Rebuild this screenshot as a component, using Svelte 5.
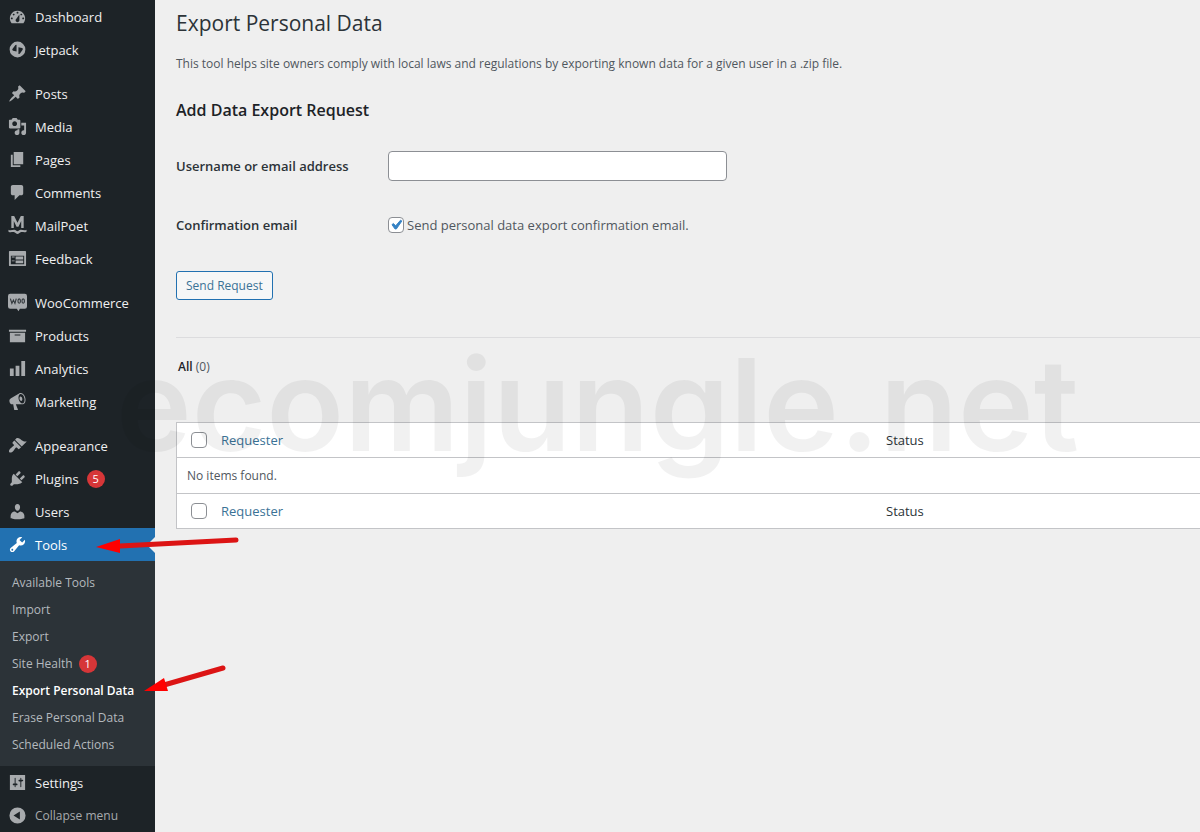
<script>
  let email = $state('');
  let sendConfirmation = $state(true);
  let allSelected = $state(false);

  const icons = {
    dashboard:
      'M3.76 17h12.48A7.998 7.998 0 0 0 10 4a7.998 7.998 0 0 0-6.24 13zM10 5c.55 0 1 .45 1 1s-.45 1-1 1-1-.45-1-1 .45-1 1-1zM6 7c.55 0 1 .45 1 1s-.45 1-1 1-1-.45-1-1 .45-1 1-1zm8 0c.55 0 1 .45 1 1s-.45 1-1 1-1-.45-1-1 .45-1 1-1zm-5.37 5.55L12 8v6c0 1.1-.9 2-2 2s-2-.9-2-2c0-.57.24-1.08.63-1.45zM4 11c.55 0 1 .45 1 1s-.45 1-1 1-1-.45-1-1 .45-1 1-1zm12 0c.55 0 1 .45 1 1s-.45 1-1 1-1-.45-1-1 .45-1 1-1z',
    jetpack:
      'M10 1.7a8.3 8.3 0 1 0 0 16.6 8.3 8.3 0 0 0 0-16.6zM9 5v7.2l-3.6-.9c-.9-.3-1.1-1-.7-1.7L7.8 5.2zM11 14.8V7.6l3.8.9c.8.3 1 1 .6 1.7L12.400 14.6z',
    posts:
      'M10.44 3.02l1.82-1.82 6.36 6.35-1.83 1.82c-1.05-.68-2.48-.57-3.41.36l-.75.75c-.92.93-1.04 2.35-.35 3.41l-1.83 1.82-2.41-2.41-2.8 2.79c-.42.42-3.38 2.71-3.8 2.29s1.86-3.39 2.28-3.81l2.79-2.79L4.1 9.36l1.83-1.82c1.05.69 2.48.57 3.4-.36l.75-.75c.93-.92 1.05-2.35.36-3.41z',
    media:
      'M13 11V4c0-.55-.45-1-1-1h-1.67L9 1H5L3.67 3H2c-.55 0-1 .45-1 1v7c0 .55.45 1 1 1h10c.55 0 1-.45 1-1zM7 4.5c1.38 0 2.5 1.12 2.5 2.5S8.38 9.5 7 9.5 4.5 8.38 4.5 7 5.62 4.5 7 4.5zM14 6h5v10.5c0 1.38-1.12 2.5-2.5 2.5S14 17.88 14 16.5s1.12-2.5 2.5-2.5c.17 0 .34.02.5.05V9h-3V6zm-4 8.05V13h2v3.5c0 1.38-1.12 2.5-2.5 2.5S7 17.88 7 16.5 8.12 14 9.5 14c.17 0 .34.02.5.05z',
    pages: 'M6 15V2h10v13H6zm-1 1h8v2H3V5h2v11z',
    comments:
      'M5 2h9c1.1 0 2 .9 2 2v7c0 1.1-.9 2-2 2h-2l-5 5v-5H5c-1.1 0-2-.9-2-2V4c0-1.1.9-2 2-2z',
    mailpoet:
      'M3.5 12.5V0h3l3.5 7 3.5-7h3v12.5h-2.6V5.3L11 11.3H9L6.1 5.3v7.2zM.5 14.5c2.5 1.5 5-.6 7 .3 1 .4 1.7 1.3 2.5 1.3s1.5-.9 2.5-1.3c2-.9 4.500 1.2 7-.3v2c-2.300 1.300-4.300-.1-6.200.5-1.300.4-2 1.900-3.300 1.900s-2-1.500-3.300-1.900c-1.900-.6-3.900.8-6.200-.5z',
    feedback:
      'M2 2h16c.55 0 1 .45 1 1v14c0 .55-.45 1-1 1H2c-.55 0-1-.45-1-1V3c0-.55.45-1 1-1zm15 14V7H3v9h14zM4 8v1h3V8H4zm4 0v3h8V8H8zm-4 4v1h3v-1H4zm4 0v3h8v-3H8z',
    woocommerce:
      'M2.3.8h15.4A2.3 2.3 0 0 1 20 3.1v11.2a2.3 2.3 0 0 1-2.3 2.3h-5.2L11 19.200l-1.700-2.600h-7A2.300 2.300 0 0 1 0 14.300V3.100A2.300 2.300 0 0 1 2.300.8z',
    products: 'M19 4v2H1V4h18zM2 7h16v10H2V7zm11 3V9H7v1h6z',
    analytics: 'M18 18V2h-4v16h4zm-6 0V7H8v11h4zm-6 0v-8H2v8h4z',
    marketing:
      'M18.15 5.94c.46 1.62.38 3.22-.02 4.48-.42 1.28-1.26 2.18-2.3 2.48-.16.06-.26.06-.4.06-.06.02-.12.02-.18.02-.06.02-.14.02-.22.02h-6.8l2.22 5.5c.02.14-.06.26-.14.34-.08.1-.24.16-.34.16H6.95c-.1 0-.26-.06-.34-.16-.08-.08-.16-.2-.14-.34l-1-5.5H4.25l-.02-.02c-.5.06-1.08-.18-1.54-.62s-.88-1.08-1.06-1.88c-.24-.8-.2-1.56-.02-2.2.18-.62.58-1.08 1.06-1.3l.02-.02 9-5.4c.1-.06.18-.1.24-.16.06-.04.14-.08.24-.12.16-.08.28-.12.5-.18 1.04-.3 2.24.1 3.22.98s1.84 2.24 2.26 3.86zm-2.58 5.98h-.02c.4-.1.74-.34 1.04-.7.58-.7.86-1.76.86-3.04 0-.64-.1-1.3-.28-1.98-.34-1.36-1.02-2.5-1.78-3.24s-1.68-1.1-2.46-.88c-.82.22-1.4.96-1.7 2-.32 1.04-.28 2.36.06 3.72.38 1.36 1 2.5 1.8 3.24.78.74 1.62 1.1 2.48.88zm-2.54-7.08c.22-.04.42-.02.62.04.38.16.76.48 1.02 1s.42 1.2.42 1.78c0 .3-.04.56-.12.8-.18.48-.44.84-.86.94-.34.1-.8-.06-1.14-.4s-.64-.86-.78-1.5c-.18-.62-.12-1.24.02-1.72s.48-.84.82-.94z',
    appearance:
      'M14.48 11.06L7.41 3.99l1.5-1.5c.5-.56 2.3-.47 3.51.32 1.21.8 1.43 1.28 2.91 2.1 1.18.64 2.45 1.26 4.45.85zm-.71.71L6.7 4.7 4.93 6.47c-.39.39-.39 1.02 0 1.41l1.06 1.06c.39.39.39 1.03 0 1.42-.6.6-1.43 1.11-2.21 1.69-.35.26-.7.53-1.01.84C1.43 14.23.4 16.08 1.4 17.07c.99 1 2.84-.03 4.18-1.36.31-.31.58-.66.85-1.02.57-.78 1.08-1.61 1.69-2.21.39-.39 1.02-.39 1.41 0l1.06 1.06c.39.39 1.02.39 1.41 0z',
    plugins:
      'M13.11 4.36L9.87 7.6 8 5.73l3.24-3.24c.35-.34 1.05-.2 1.56.32.52.51.66 1.21.31 1.55zm-8 1.77l.91-1.12 9.01 9.01-1.19.84c-.71.71-2.63 1.16-3.82 1.16H6.14L4.9 17.26c-.59.59-1.54.59-2.12 0-.59-.58-.59-1.53 0-2.12l1.24-1.24v-3.88c0-1.13.4-3.19 1.09-3.89zm7.26 3.97l3.24-3.24c.34-.35 1.04-.21 1.55.31.52.51.66 1.21.31 1.55l-3.24 3.25z',
    users:
      'M10 9.25c-2.27 0-2.73-3.44-2.73-3.44C7 4.02 7.82 2 9.97 2c2.16 0 2.98 2.02 2.71 3.81 0 0-.41 3.44-2.68 3.44zm0 2.57L12.72 10c2.39 0 4.52 2.33 4.52 4.53v2.49s-3.65 1.13-7.24 1.13c-3.65 0-7.24-1.13-7.24-1.13v-2.49c0-2.25 1.94-4.48 4.47-4.48z',
    tools:
      'M16.68 9.77c-1.34 1.34-3.3 1.67-4.95.99l-5.41 6.52c-.99.99-2.59.99-3.58 0s-.99-2.59 0-3.57l6.52-5.42c-.68-1.65-.35-3.61.99-4.95 1.28-1.28 3.12-1.62 4.72-1.06l-2.89 2.89 2.82 2.82 2.86-2.87c.53 1.58.18 3.39-1.08 4.65zM3.81 16.21c.4.39 1.04.39 1.43 0 .4-.4.4-1.04 0-1.43-.39-.4-1.03-.4-1.43 0-.39.39-.39 1.03 0 1.43z',
    settings:
      'M18 18V2H2v16h16zM8 11h1c.55 0 1 .45 1 1s-.45 1-1 1H8v1.5c0 .28-.22.5-.5.5s-.5-.22-.5-.5V13H6c-.55 0-1-.45-1-1s.45-1 1-1h1V5.5c0-.28.22-.5.5-.5s.5.22.5.5V11zm5-2h-1c-.55 0-1-.45-1-1s.45-1 1-1h1V5.5c0-.28.22-.5.5-.5s.5.22.5.5V7h1c.55 0 1 .45 1 1s-.45 1-1 1h-1v5.5c0 .28-.22.5-.5.5s-.5-.22-.5-.5V9z',
    collapse:
      'M10 1.500a8.500 8.500 0 1 1 0 17 8.500 8.500 0 0 1 0-17zm2.500 12.700V5.800L5.800 10z'
  };

  const groups = [
    [
      { icon: 'dashboard', label: 'Dashboard' },
      { icon: 'jetpack', label: 'Jetpack' }
    ],
    [
      { icon: 'posts', label: 'Posts' },
      { icon: 'media', label: 'Media' },
      { icon: 'pages', label: 'Pages' },
      { icon: 'comments', label: 'Comments' },
      { icon: 'mailpoet', label: 'MailPoet' },
      { icon: 'feedback', label: 'Feedback' }
    ],
    [
      { icon: 'woocommerce', label: 'WooCommerce' },
      { icon: 'products', label: 'Products' },
      { icon: 'analytics', label: 'Analytics' },
      { icon: 'marketing', label: 'Marketing' }
    ],
    [
      { icon: 'appearance', label: 'Appearance' },
      { icon: 'plugins', label: 'Plugins', count: 5 },
      { icon: 'users', label: 'Users' },
      {
        icon: 'tools',
        label: 'Tools',
        open: true,
        children: [
          { label: 'Available Tools' },
          { label: 'Import' },
          { label: 'Export' },
          { label: 'Site Health', count: 1 },
          { label: 'Export Personal Data', current: true },
          { label: 'Erase Personal Data' },
          { label: 'Scheduled Actions' }
        ]
      },
      { icon: 'settings', label: 'Settings' }
    ]
  ];
</script>

{#snippet icon(name)}
  <svg class="icon" viewBox="0 0 20 20" aria-hidden="true">
    <path d={icons[name]} fill-rule="evenodd" />
    {#if name === 'woocommerce'}
      <path class="woo-mark" d="M2.500 6l1.600 5L5.700 7.500 7.300 11l1.400-5" />
      <ellipse class="woo-mark" cx="11.800" cy="8.500" rx="1.300" ry="2.300" />
      <ellipse class="woo-mark" cx="16" cy="8.500" rx="1.300" ry="2.300" />
    {/if}
  </svg>
{/snippet}

<div class="admin">
  <nav class="menu" aria-label="Main menu">
    {#each groups as group}
      <ul class="group">
        {#each group as item}
          <li>
            <a href="#{item.icon}" class="item" class:open={item.open}>
              {@render icon(item.icon)}
              <span>{item.label}</span>
              {#if item.count}<span class="count">{item.count}</span>{/if}
            </a>
            {#if item.children}
              <ul class="submenu">
                {#each item.children as child}
                  <li>
                    <a href="#tools" class="subitem" class:current={child.current}>
                      <span>{child.label}</span>
                      {#if child.count}<span class="count">{child.count}</span>{/if}
                    </a>
                  </li>
                {/each}
              </ul>
            {/if}
          </li>
        {/each}
      </ul>
    {/each}
    <button type="button" class="item collapse">
      {@render icon('collapse')}
      <span>Collapse menu</span>
    </button>
  </nav>

  <main>
    <h1>Export Personal Data</h1>
    <p class="intro">
      This tool helps site owners comply with local laws and regulations by exporting known data
      for a given user in a .zip file.
    </p>

    <form onsubmit={(e) => e.preventDefault()}>
      <h2>Add Data Export Request</h2>
      <div class="field">
        <label class="name" for="email">Username or email address</label>
        <input id="email" type="text" class="text" bind:value={email} />
      </div>
      <div class="field">
        <span class="name">Confirmation email</span>
        <label class="check">
          <input type="checkbox" bind:checked={sendConfirmation} />
          Send personal data export confirmation email.
        </label>
      </div>
      <button type="submit" class="send">Send Request</button>
    </form>

    <hr />

    <p class="filter"><strong>All</strong> (0)</p>

    {#snippet headings()}
      <tr>
        <th class="cb"><input type="checkbox" aria-label="Select all" bind:checked={allSelected} /></th>
        <th class="requester"><a href="#requester">Requester</a></th>
        <th>Status</th>
      </tr>
    {/snippet}

    <table>
      <thead>{@render headings()}</thead>
      <tbody>
        <tr><td colspan="3">No items found.</td></tr>
      </tbody>
      <tfoot>{@render headings()}</tfoot>
    </table>
  </main>

  <div class="watermark" aria-hidden="true">ecomjungle.net</div>

  <svg class="arrow to-tools" viewBox="0 0 146 20" aria-hidden="true">
    <path class="shaft" d="M24 10L140 4" />
    <path class="head" d="M0 11L24 3v14z" />
  </svg>
  <svg class="arrow to-export" viewBox="0 0 84 30" aria-hidden="true">
    <path class="shaft" d="M20 21L79 4" />
    <path class="head" d="M0 27L20 14l4 13z" />
  </svg>
</div>

<style>
  :global(body) {
    margin: 0;
    background: #efefef;
  }

  .admin {
    position: relative;
    display: flex;
    min-height: 100vh;
    overflow: hidden;
    font-family: 'Segoe UI', 'Open Sans', 'Noto Sans', sans-serif;
    font-size: 13px;
    color: #50575e;
  }

  ul {
    margin: 0;
    padding: 0;
    list-style: none;
  }

  a {
    color: #3a7296;
    text-decoration: none;
  }

  .menu {
    flex: none;
    width: 155px;
    background: #1d2327;
  }

  .group + .group {
    margin-top: 11px;
  }

  .item {
    position: relative;
    display: flex;
    align-items: center;
    gap: 8px;
    width: 100%;
    height: 33px;
    padding: 0 8px;
    box-sizing: border-box;
    color: #f0f0f1;
    white-space: nowrap;
  }

  .icon {
    flex: none;
    width: 19px;
    height: 19px;
    fill: #a7aaad;
  }

  .woo-mark {
    fill: none;
    stroke: #33393d;
    stroke-width: 1.2;
  }

  .item.open {
    background: #2271b1;
    color: #fff;
  }

  .item.open .icon {
    fill: #fff;
  }

  /* notch pointing from the page to the open section */
  .item.open::after {
    content: '';
    position: absolute;
    right: 0;
    top: 9px;
    border: 8px solid transparent;
    border-left-width: 0;
    border-right-color: #efefef;
  }

  .count {
    width: 18px;
    height: 18px;
    border-radius: 9px;
    background: #d63638;
    color: #fff;
    font-size: 11px;
    line-height: 18px;
    text-align: center;
  }

  .submenu {
    padding: 8px 0;
    background: #2c3338;
  }

  .subitem {
    display: flex;
    align-items: center;
    gap: 6px;
    height: 27px;
    padding-left: 12px;
    color: #b4b9be;
    font-size: 12px;
    white-space: nowrap;
  }

  .subitem.current {
    color: #fff;
    font-weight: 600;
  }

  .collapse {
    border: 0;
    background: none;
    color: #a7aaad;
    font: inherit;
    font-size: 12px;
    text-align: left;
    cursor: pointer;
  }

  main {
    flex: 1;
    min-width: 0;
    padding: 8px 0 0 21px;
  }

  h1 {
    margin: 0;
    color: #2c3338;
    font-size: 21px;
    font-weight: 400;
    line-height: 30px;
  }

  .intro {
    margin: 16px 0 0;
    font-size: 12px;
    line-height: 20px;
  }

  h2 {
    margin: 24px 0 0;
    color: #1d2327;
    font-size: 16px;
    font-weight: 600;
    line-height: 24px;
  }

  .field {
    display: flex;
    align-items: center;
    height: 30px;
    margin-top: 29px;
  }

  .name {
    width: 212px;
    color: #2c3338;
    font-weight: 600;
  }

  input {
    margin: 0;
    border: 1px solid #8c8f94;
    background: #fff;
    box-sizing: border-box;
  }

  .text {
    width: 339px;
    height: 30px;
    padding: 0 8px;
    border-radius: 4px;
    font: inherit;
  }

  .check {
    display: flex;
    align-items: center;
    gap: 3px;
  }

  input[type='checkbox'] {
    appearance: none;
    display: block;
    width: 16px;
    height: 16px;
    border-radius: 4px;
  }

  input[type='checkbox']:checked {
    background: #fff
      url("data:image/svg+xml,%3Csvg xmlns='http://www.w3.org/2000/svg' viewBox='0 0 20 20'%3E%3Cpath d='M14.83 4.89l1.34.94-5.81 8.38H9.02L5.78 9.67l1.34-1.25 2.57 2.4z' fill='%233582c4' stroke='%233582c4'/%3E%3C/svg%3E")
      center / 19px no-repeat;
  }

  .send {
    height: 29px;
    margin-top: 31px;
    padding: 0 9px;
    border: 1px solid #2271b1;
    border-radius: 3px;
    background: #f6f7f7;
    color: #3a7296;
    font: inherit;
    font-size: 12px;
    cursor: pointer;
  }

  hr {
    margin: 37px 0 0;
    border: 0;
    border-top: 1px solid #dcdcde;
  }

  .filter {
    margin: 19px 0 0;
    padding-left: 2px;
    font-size: 12px;
    line-height: 20px;
  }

  .filter strong {
    color: #1d2327;
    font-weight: 600;
  }

  table {
    width: 100%;
    margin-top: 45px;
    border: 1px solid #c3c4c7;
    border-right: 0;
    border-spacing: 0;
    background: #fff;
  }

  th,
  td {
    height: 34px;
    padding: 0 0 0 10px;
    font-weight: 400;
    text-align: left;
  }

  th {
    color: #2c3338;
  }

  td {
    height: 35px;
    font-size: 12px;
  }

  thead th,
  tbody td {
    border-bottom: 1px solid #c3c4c7;
  }

  .cb {
    width: 20px;
    padding-left: 14px;
  }

  .requester {
    width: 655px;
  }

  .watermark {
    position: absolute;
    left: 116px;
    top: 325px;
    color: rgba(0, 0, 0, 0.055);
    font-family: Inter, sans-serif;
    font-size: 128px;
    font-weight: 600;
    line-height: 160px;
    white-space: nowrap;
    pointer-events: none;
  }

  .arrow {
    position: absolute;
    pointer-events: none;
  }

  .to-tools {
    left: 96px;
    top: 536px;
    width: 146px;
  }

  .to-export {
    left: 144px;
    top: 664px;
    width: 84px;
  }

  .shaft {
    fill: none;
    stroke: #dc1414;
    stroke-width: 5;
    stroke-linecap: round;
  }

  .head {
    fill: #f00;
  }
</style>
